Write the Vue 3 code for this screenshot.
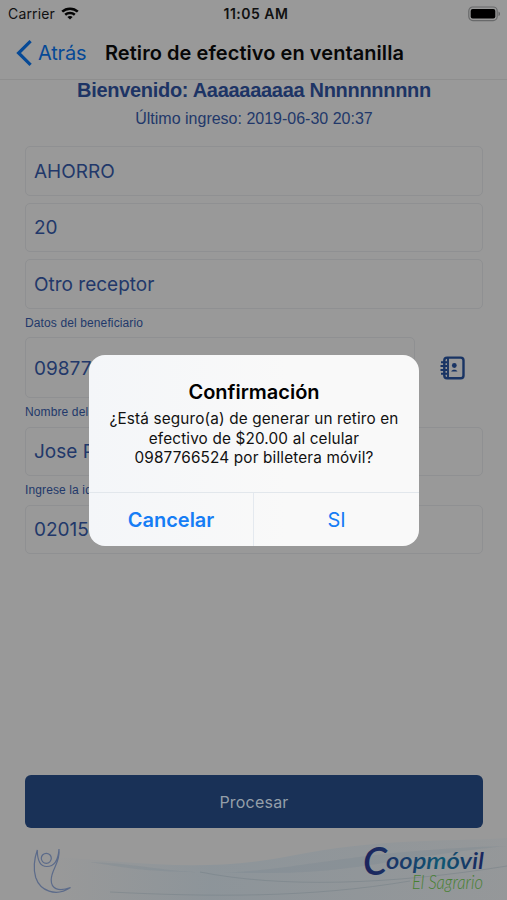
<script setup>
const topFields = ['AHORRO', '20', 'Otro receptor']
const lowerFields = [
  { label: 'Nombre del', value: 'Jose P' },
  { label: 'Ingrese la id', value: '02015' }
]
</script>

<template>
  <div class="screen">
    <div class="status">
      <div class="carrier">
        <span>Carrier</span>
        <svg width="18" height="13" viewBox="0 0 18 13" fill="none" stroke="#050505" stroke-width="2.5">
          <path d="M1.2 4.7C5.5.6 12.5.6 16.8 4.7M4.2 7.8c2.7-2.4 6.9-2.4 9.6 0" />
          <path d="M9 12.6 6.4 10c1.5-1.2 3.7-1.2 5.2 0Z" fill="#050505" stroke="none" />
        </svg>
      </div>
      <span class="clock">11:05 AM</span>
      <svg class="battery" width="33" height="16" viewBox="0 0 33 16">
        <rect x=".8" y="1" width="28.4" height="13.6" rx="4" fill="none" stroke="#68696a" stroke-width="1.2" />
        <rect x="2.7" y="3" width="24.6" height="9.6" rx="2" fill="#000" />
        <path d="M30.5 5.5c2 .8 2 3.8 0 4.6Z" fill="#626364" />
      </svg>
    </div>

    <header class="nav">
      <div class="back">
        <svg width="16" height="26" viewBox="0 0 16 26" fill="none" stroke="#064996" stroke-width="3.2">
          <path d="M14.6 1.2 2.6 13l12 11.8" />
        </svg>
        <span>Atrás</span>
      </div>
      <h1>Retiro de efectivo en ventanilla</h1>
    </header>

    <main>
      <h2>Bienvenido: Aaaaaaaaaa Nnnnnnnnnn</h2>
      <p class="last">Último ingreso: 2019-06-30 20:37</p>
      <div class="stack">
        <div v-for="f in topFields" :key="f" class="field">{{ f }}</div>
      </div>
      <div class="label">Datos del beneficiario</div>
      <div class="phone-row">
        <div class="field phone">09877</div>
        <svg class="contacts" width="26" height="24" viewBox="0 0 26 24" fill="none" stroke="#193464" stroke-width="2.4">
          <rect x="4.3" y="1.6" width="19.2" height="20.6" rx="2.8" />
          <path d="M8 2v20" stroke-width="1.9" />
          <path d="M1 6.2h6M.5 10h6.5M.5 14h6.5M1 17.8h6" stroke-width="2.1" />
          <circle cx="14.3" cy="9.5" r="2.4" fill="#193464" stroke="none" />
          <path d="M11.2 15.6c.7-2.6 5.5-2.6 6.2 0Z" fill="#193464" stroke="none" />
        </svg>
      </div>
      <template v-for="f in lowerFields" :key="f.label">
        <div class="label">{{ f.label }}</div>
        <div class="field">{{ f.value }}</div>
      </template>
    </main>

    <button class="submit">Procesar</button>

    <footer>
      <svg width="507" height="72" viewBox="0 0 507 72">
        <defs>
          <linearGradient id="mist" x1="0" x2="1">
            <stop offset="0" stop-color="#89939a" stop-opacity="0" />
            <stop offset=".35" stop-color="#89939a" stop-opacity=".75" />
            <stop offset="1" stop-color="#89939a" stop-opacity=".25" />
          </linearGradient>
          <linearGradient id="blue" gradientUnits="userSpaceOnUse" x1="363" y1="0" x2="484" y2="0">
            <stop offset="0" stop-color="#1c225c" />
            <stop offset=".4" stop-color="#17406c" />
            <stop offset=".65" stop-color="#0e5873" />
            <stop offset="1" stop-color="#19245e" />
          </linearGradient>
        </defs>
        <path d="M50 29C130 33 200 46 290 28S440 14 507 10v62H50Z" fill="url(#mist)" />
        <path d="M90 34c60 2 90 15 160 9S370 22 507 18c-120 12-150 28-250 27S150 44 90 34Z" fill="#78868f" opacity=".28" />
        <path d="M200 44c80 16 190 13 307-6M110 64c100 5 200 6 300-11" fill="none" stroke="#6d7a83" opacity=".4" />
        <g fill="none" stroke="#5c6b8a" stroke-width="1.2" stroke-linecap="round">
          <circle cx="46.3" cy="30.3" r="5" />
          <path d="M37.3 22c0 10 3 16.500 9.500 16.500 8 0 11.500-7 12.200-17.500 1.500 14-7.800 20-7.800 31 0 8 6.300 12.500 19.300 7.500-15 10-30.500 3-34.800-10C33 40 34.500 30 37.300 22Z" />
        </g>
        <g fill="url(#blue)" class="brand">
          <text x="363" y="47" font-size="38" textLength="24" lengthAdjust="spacingAndGlyphs">C</text>
          <text x="386" y="41" font-size="23" textLength="98" lengthAdjust="spacingAndGlyphs">oopmóvil</text>
        </g>
        <text x="412" y="61" font-size="20" textLength="71" lengthAdjust="spacingAndGlyphs" class="sub">El Sagrario</text>
      </svg>
    </footer>

    <div class="dialog" role="alertdialog">
      <div class="message">
        <h3>Confirmación</h3>
        <p>¿Está seguro(a) de generar un retiro en<br />efectivo de $20.00 al celular<br />0987766524 por billetera móvil?</p>
      </div>
      <div class="actions">
        <button class="cancel">Cancelar</button>
        <button>SI</button>
      </div>
    </div>
  </div>
</template>

<style>
body { margin: 0; background: #999; }
</style>

<style scoped>
* { box-sizing: border-box; }
.screen {
  position: relative;
  width: 507px;
  height: 900px;
  overflow: hidden;
  display: flex;
  flex-direction: column;
  background: #999;
  font-family: Inter, "Liberation Sans", sans-serif;
  white-space: nowrap;
}
h1, h2, h3, p { margin: 0; }
button { border: 0; padding: 0; background: none; font-family: inherit; }
.status {
  height: 27px;
  display: grid;
  grid-template-columns: 1fr auto 1fr;
  align-items: center;
  padding: 0 6px 0 8px;
  font-size: 14px;
  color: #111;
}
.carrier { display: flex; align-items: center; gap: 6px; letter-spacing: 0.15px; }
.clock { font-weight: 600; letter-spacing: 0.5px; margin-left: 3px; }
.battery { justify-self: end; }
.nav {
  height: 53px;
  display: flex;
  align-items: center;
  padding-left: 16px;
  border-bottom: 1px solid #8e8e8e;
}
.back { display: flex; align-items: center; gap: 6px; width: 89px; font-size: 20px; letter-spacing: -0.2px; color: #064996; }
h1 { font-size: 20px; line-height: 24px; font-weight: 600; color: #070707; letter-spacing: 0.06px; }
main { height: 695px; padding: 0 24px 0 25px; color: #22386a; }
h2 {
  text-align: center;
  font: bold 20px/20px "Liberation Sans", sans-serif;
  letter-spacing: -0.3px;
  color: #1d3465;
}
.last { text-align: center; font: 16px/20px "Liberation Sans", sans-serif; margin-top: 9px; }
.stack { display: flex; flex-direction: column; gap: 7px; margin-top: 17px; }
.field {
  height: 49.5px;
  display: flex;
  align-items: center;
  padding: 1px 0 0 8px;
  border: 1px solid #8f9092;
  border-radius: 5px;
  font-size: 19px;
}
.label { height: 28.5px; font: 12px/29px "Liberation Sans", sans-serif; letter-spacing: 0.12px; }
.phone-row { display: flex; align-items: center; }
.phone { width: 390px; height: 61px; }
.contacts { margin-left: 25px; }
.submit {
  flex: none;
  width: 458px;
  height: 53px;
  margin-left: 25px;
  border-radius: 6px;
  background: #193157;
  color: #949fa9;
  font-size: 16px;
  letter-spacing: 0.2px;
}
footer { height: 72px; }
footer svg { display: block; }
.brand { font-family: Lato, sans-serif; font-style: italic; font-weight: 600; }
.sub { font-family: Lato, sans-serif; font-style: italic; font-weight: 300; fill: #478032; }
.dialog {
  position: absolute;
  left: 89px;
  top: 355px;
  width: 330px;
  height: 191px;
  display: flex;
  flex-direction: column;
  border-radius: 16px;
  overflow: hidden;
  background: linear-gradient(90deg, #f4f6f9, #f9f9f9 60%);
}
.message { flex: 1; padding-top: 24px; text-align: center; color: #111; }
h3 { font-size: 20px; line-height: 26px; font-weight: 600; color: #000; }
.message p { font-size: 15.3px; line-height: 19.5px; margin-top: 4px; letter-spacing: 0.16px; }
.actions { display: grid; grid-template-columns: 1fr 1fr; height: 54px; border-top: 1px solid #e2e7ec; }
.actions button { font-size: 20px; color: #167df5; }
.actions .cancel { font-weight: 600; border-right: 1px solid #e4e9ef; }
</style>
